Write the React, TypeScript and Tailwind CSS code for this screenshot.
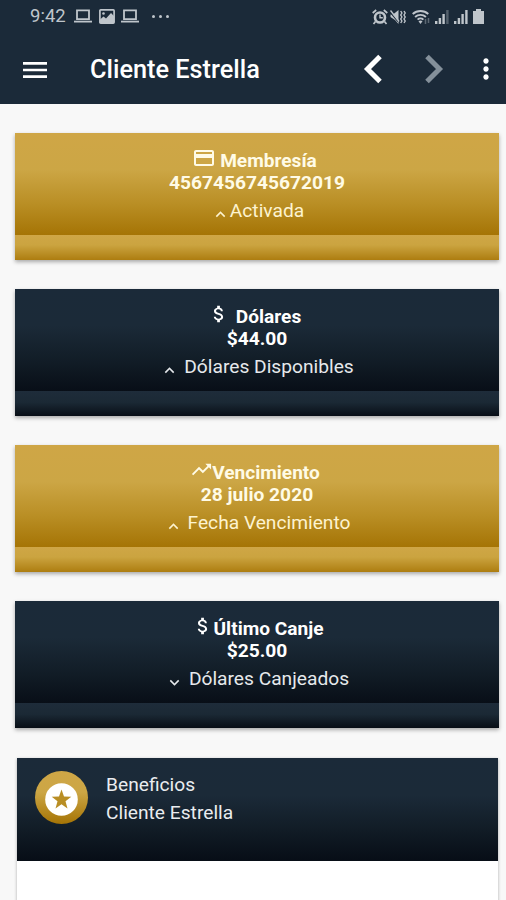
import {
  MdAttachMoney,
  MdKeyboardArrowDown,
  MdKeyboardArrowUp,
  MdMenu,
  MdMoreVert,
  MdOutlineCreditCard,
  MdTrendingUp,
} from "react-icons/md";

// Gradients for the two card themes
const themes = {
  gold: {
    body: "bg-[linear-gradient(#cfa646_0%,#cca645_36%,#b98e24_70%,#a57405_100%)]",
    footer: "bg-[linear-gradient(#cfa646_0%,#cba440_40%,#ad7d10_100%)]",
    text: "text-[#fffbe6]",
    label: "text-[#fdf3d0]",
  },
  navy: {
    body: "bg-[linear-gradient(#1b2a39_0%,#1b2a38_36%,#111c26_72%,#080e17_100%)]",
    footer: "bg-[linear-gradient(#1e2c3a_0%,#1b2935_45%,#080e16_100%)]",
    text: "text-white",
    label: "text-[#e6e9ec]",
  },
};

const cards = [
  {
    theme: "gold",
    icon: MdOutlineCreditCard,
    iconClass: "size-[24px] mr-[4px]",
    title: "Membresía",
    titleClass: "pr-[5px]",
    value: "4567456745672019",
    arrow: MdKeyboardArrowUp,
    label: "Activada",
    labelClass: "gap-0 pl-[1px]",
  },
  {
    theme: "navy",
    icon: MdAttachMoney,
    iconClass: "size-[22px] mr-[6px]",
    title: "Dólares",
    titleClass: "pr-[5px]",
    value: "$44.00",
    arrow: MdKeyboardArrowUp,
    label: "Dólares Disponibles",
    labelClass: "gap-[5px]",
  },
  {
    theme: "gold",
    icon: MdTrendingUp,
    iconClass: "size-[23px] -mr-px",
    title: "Vencimiento",
    titleClass: "pr-[4px]",
    value: "28 julio 2020",
    arrow: MdKeyboardArrowUp,
    label: "Fecha Vencimiento",
    labelClass: "gap-[5px]",
  },
  {
    theme: "navy",
    icon: MdAttachMoney,
    iconClass: "size-[22px]",
    title: "Último Canje",
    titleClass: "pl-px",
    value: "$25.00",
    arrow: MdKeyboardArrowDown,
    label: "Dólares Canjeados",
    labelClass: "gap-[5px]",
  },
];

function LaptopIcon() {
  return (
    <svg viewBox="0 0 18 14" className="h-[14px] w-[18px]" fill="none" stroke="currentColor" strokeWidth="1.8">
      <path d="M3 1.400h12v8.800H3z" />
      <path d="M0 12.600h18" />
    </svg>
  );
}

function PictureIcon() {
  return (
    <svg viewBox="0 0 16 15" className="h-[15px] w-[16px]">
      <rect x="0.900" y="0.900" width="14.200" height="13.200" rx="0.800" fill="none" stroke="currentColor" strokeWidth="1.700" />
      <path d="M1 14v-3.500l3.500-3 2.500 2L12 4l3 3v7z" fill="currentColor" />
      <circle cx="4.500" cy="4.500" r="1.300" fill="currentColor" />
    </svg>
  );
}

function AlarmIcon() {
  return (
    <svg viewBox="0 0 16 16" className="h-[16px] w-[16px]" fill="none" stroke="currentColor">
      <circle cx="8" cy="8.500" r="5" strokeWidth="2.600" />
      <path d="M0.700 4l3.500-3M15.300 4l-3.500-3" strokeWidth="1.700" />
      <path d="M3.500 12.500l-2 2.500M12.500 12.500l2 2.500" strokeWidth="1.700" />
      <path d="M8 5.500v3.300h2.800" strokeWidth="1.400" />
    </svg>
  );
}

function MutedIcon() {
  return (
    <svg viewBox="0 0 16 16" className="h-[16px] w-[16px]" fill="none" stroke="currentColor">
      <path d="M0.500 5.500h2.500l5.500-4.500v14L5 11 0.500 8z" fill="currentColor" stroke="none" />
      <path d="M0 3l8 9.500" stroke="#1b2a39" strokeWidth="1.200" />
      <path d="M0.500 1.500l8.500 11" strokeWidth="1.400" />
      <path d="M10.700 2l1.200 2-1.200 2 1.200 2-1.200 2 1.200 2-1.200 2M14 2l1.200 2-1.200 2 1.200 2-1.200 2 1.200 2-1.200 2" strokeWidth="1.400" />
    </svg>
  );
}

function WifiIcon() {
  return (
    <svg viewBox="0 0 18 16" className="h-[16px] w-[18px]" fill="none" stroke="currentColor" strokeWidth="1.9">
      <path d="M0.700 5c4.400-4 11.200-4 15.600 0M3.100 8c3-2.900 7.800-2.900 10.800 0M5.600 10.700c1.600-1.600 4.200-1.600 5.800 0" />
      <path d="M6.500 12.300l2 2.700 2-2.700q-2-1.500-4 0z" fill="currentColor" stroke="none" />
      <path d="M13.500 10v5M16.500 9v5" strokeWidth="1.500" opacity=".4" />
    </svg>
  );
}

function SignalIcon({ weak = false }: { weak?: boolean }) {
  return (
    <svg viewBox="0 0 14 15" className="h-[15px] w-[14px]" fill="currentColor">
      <path d="M0 12h2.400v3H0zM3.700 9h2.400v6H3.700zM7.400 5h2.400v10H7.400z" />
      <path d="M11.200 1h2.400v14h-2.400z" opacity={weak ? 0.35 : 1} />
    </svg>
  );
}

function StatusBar() {
  return (
    <div className="flex h-[32px] items-center justify-between pr-[22px] pl-[30px] text-[#bfc5cb]">
      <div className="flex items-center">
        <span className="w-[44px] text-[18.5px] leading-[32px] whitespace-nowrap">9:42</span>
        <LaptopIcon />
        <span className="ml-[7px]"><PictureIcon /></span>
        <span className="ml-[6px]"><LaptopIcon /></span>
        <div className="ml-[13px] flex gap-[4px]">
          <i className="size-[3px] rounded-full bg-current" />
          <i className="size-[3px] rounded-full bg-current" />
          <i className="size-[3px] rounded-full bg-current" />
        </div>
      </div>
      <div className="flex items-center pt-px">
        <AlarmIcon />
        <span className="ml-[2px]"><MutedIcon /></span>
        <span className="ml-[6px]"><WifiIcon /></span>
        <span className="ml-[5px]"><SignalIcon weak /></span>
        <span className="ml-[5px]"><SignalIcon /></span>
        <svg viewBox="0 0 11 15" className="ml-[5px] h-[15px] w-[11px]" fill="currentColor">
          <path d="M3 0h5v2h3v13H0V2h3z" />
        </svg>
      </div>
    </div>
  );
}

function Toolbar() {
  return (
    <div className="flex h-[72px] items-center pt-[3px] text-white">
      <MdMenu className="ml-[19px] size-[32px]" />
      <h1 className="ml-[39px] w-[273px] pt-px text-[25.3px] leading-[30px] font-medium whitespace-nowrap">
        Cliente Estrella
      </h1>
      <svg viewBox="0 0 20 30" className="-mt-[2px] h-[30px] w-[20px]" fill="none" stroke="currentColor" strokeWidth="5">
        <path d="M17 2.500L4.500 15l12.500 12.500" />
      </svg>
      <svg viewBox="0 0 20 30" className="-mt-[2px] ml-[41px] h-[30px] w-[20px] text-[#84909a]" fill="none" stroke="currentColor" strokeWidth="5">
        <path d="M3 2.500L15.500 15 3 27.500" />
      </svg>
      <MdMoreVert className="-mt-px ml-[26px] size-[32px] shrink-0" />
    </div>
  );
}

function StatCard({ card }: { card: (typeof cards)[0] }) {
  const theme = themes[card.theme as keyof typeof themes];
  const Icon = card.icon;
  const Arrow = card.arrow;

  return (
    <section className="h-[127px] shadow-[0_2px_4px_rgba(0,0,0,0.32)]">
      <div className={`h-[102px] pt-[16px] ${theme.body} ${theme.text}`}>
        <div className={`flex h-[23px] items-center justify-center ${card.titleClass}`}>
          <Icon className={`-mt-[6px] shrink-0 ${card.iconClass}`} />
          <h2 className="text-[19.1px] leading-[22px] font-bold">{card.title}</h2>
        </div>
        <p className="text-center text-[19.2px] leading-[22px] font-bold">{card.value}</p>
        <div className={`mt-[4px] flex h-[26px] items-center justify-center ${card.labelClass} ${theme.label}`}>
          <Arrow className="mt-[7px] size-[19px] shrink-0" />
          <span className="text-[19.2px] leading-[26px]">{card.label}</span>
        </div>
      </div>
      <div className={`h-[25px] ${theme.footer}`} />
    </section>
  );
}

export default function App() {
  return (
    <div className="h-[900px] w-[506px] overflow-hidden bg-[#f8f8f8] font-['Roboto',sans-serif]">
      <header className="h-[104px] bg-[#1b2a39]">
        <StatusBar />
        <Toolbar />
      </header>

      <main className="flex flex-col gap-[29px] pt-[29px] pr-[7px] pl-[15px]">
        {cards.map((card) => (
          <StatCard key={card.title} card={card} />
        ))}

        {/* Benefits */}
        <section className="mt-px mr-px ml-[2px] h-[160px] bg-white shadow-[0_1px_3px_rgba(0,0,0,0.3)]">
          <div className="flex h-[103px] bg-[linear-gradient(#1b2a39_0%,#1b2a38_36%,#111c26_70%,#070d16_100%)] pl-[18px]">
            <div className="mt-[13px] flex size-[53px] items-center justify-center rounded-full bg-[linear-gradient(#cfa646_0%,#cca645_40%,#a57405_100%)]">
              <svg viewBox="0 0 33 33" className="mt-[4px] size-[33px]">
                <circle cx="16.500" cy="16.500" r="16.300" fill="#fff" />
                <path
                  d="M16.500 6.500l2.500 7 7.300.2-5.800 4.500 2 7.200-6-4.200-6 4.200 2-7.200-5.800-4.500 7.300-.2z"
                  fill="#b98e24"
                />
              </svg>
            </div>
            <div className="mt-[13px] ml-[18px] text-[19.2px] leading-[28px] text-[#e9ecef]">
              <p>Beneficios</p>
              <p>Cliente Estrella</p>
            </div>
          </div>
        </section>
      </main>
    </div>
  );
}
